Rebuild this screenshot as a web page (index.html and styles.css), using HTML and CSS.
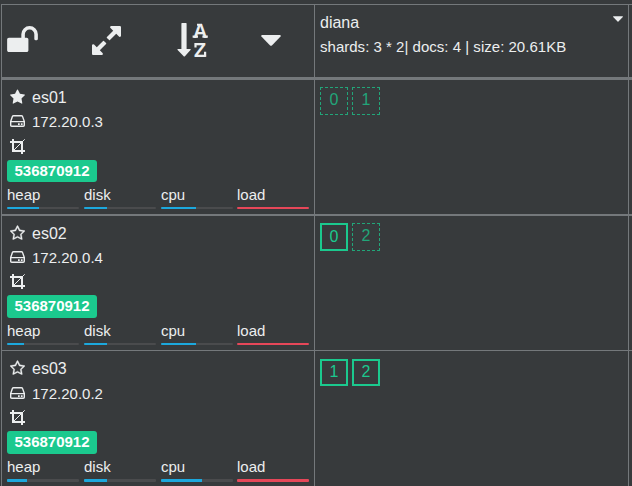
FILE: index.html
```html
<!DOCTYPE html>
<html lang="en">
<head>
<meta charset="utf-8">
<title>Cluster nodes</title>
<link rel="stylesheet" href="styles.css">
</head>
<body>
<svg class="defs" width="0" height="0">
  <symbol id="star" viewBox="0 0 1664 1640"><path d="M1664 647q0 22-26 48l-363 354 86 500q1 7 1 20 0 21-10.5 35.5t-30.5 14.5q-19 0-40-12l-449-236-449 236q-22 12-40 12-21 0-31.5-14.5t-10.5-35.5q0-6 2-20l86-500-364-354q-25-27-25-48 0-37 56-46l502-73 225-455q19-41 49-41t49 41l225 455 502 73q56 9 56 46z"/></symbol>
  <symbol id="star-o" viewBox="0 0 1664 1640"><path stroke="currentColor" stroke-width="40" d="M1137 1004l306-297-422-62-189-382-189 382-422 62 306 297-73 421 378-199 377 199zm527-357q0 22-26 48l-363 354 86 500q1 7 1 20 0 50-41 50-19 0-40-12l-449-236-449 236q-22 12-40 12-21 0-31.5-14.5t-10.5-35.5q0-6 2-20l86-500-364-354q-25-27-25-48 0-37 56-46l502-73 225-455q19-41 49-41t49 41l225 455 502 73q56 9 56 46z"/></symbol>
  <symbol id="disk" viewBox="0 0 15 12"><path d="M.7 6.6h13.6v3.6q0 1.1-1.1 1.1H1.8Q.7 11.3.7 10.2zM.7 6.6l1.7-5q.3-.9 1.2-.9h7.8q.9 0 1.2.9l1.7 5" fill="none" stroke="currentColor" stroke-width="1.4"/><path d="M8 8.2h1.7v1.7H8zM10.9 8.2h1.7v1.7h-1.7z"/></symbol>
  <symbol id="crop" viewBox="0 0 15 15"><path d="M0 3h12v12M3 0v12h12" fill="none" stroke="currentColor" stroke-width="2"/><path d="M3.6 11.4L14.7.3" stroke="currentColor" stroke-width="1"/></symbol>
</svg>
<main class="grid">
  <div class="cell head tools">
    <svg class="unlock" viewBox="0 256 1664 1408"><path d="M1664 704v256q0 26-19 45t-45 19h-64q-26 0-45-19t-19-45v-256q0-106-75-181t-181-75-181 75-75 181v192h96q40 0 68 28t28 68v576q0 40-28 68t-68 28h-960q-40 0-68-28t-28-68v-576q0-40 28-68t68-28h672v-192q0-185 131.5-316.5t316.5-131.5 316.5 131.5 131.5 316.5z"/></svg>
    <svg class="expand" viewBox="0 128 1536 1536"><path d="M755 1056q0 13-10 23l-332 332 144 144q19 19 19 45t-19 45-45 19h-448q-26 0-45-19t-19-45v-448q0-26 19-45t45-19 45 19l144 144 332-332q10-10 23-10t23 10l114 114q10 10 10 23zm781-864v448q0 26-19 45t-45 19-45-19l-144-144-332 332q-10 10-23 10t-23-10l-114-114q-10-10-10-23t10-23l332-332-144-144q-19-19-19-45t19-45 45-19h448q26 0 45 19t19 45z"/></svg>
    <svg class="sort" viewBox="0 0 32 34"><path d="M5 0h4q.6 0 .6.6V26h3.8q.7.4.1 1L7.7 33.4q-.4.4-.8 0L.6 27q-.5-.6.2-1h3.6V.6Q4.4 0 5 0z"/><text x="16" y="14.6">A</text><path d="M15.6 12.6h5.4v2.2h-5.4zM25.4 12.6h5.4v2.2h-5.4zM20 .8h5v2h-5z"/><text x="17.1" y="33.8">Z</text><path d="M17.4 20h2.2v4.6h-2.2zM27 28.8h2.2v5H27z"/></svg>
    <svg class="caret" viewBox="0 0 20 11"><path d="M1 0h18q1.4.5.6 1.6l-8.7 8.8q-.9.8-1.8 0L.4 1.6Q-.4.5 1 0z"/></svg>
  </div>
  <div class="cell head index">
    <div class="index-title"><span>diana</span><svg class="caret-small" viewBox="0 0 20 11"><path d="M1 0h18q1.4.5.6 1.6l-8.7 8.8q-.9.8-1.8 0L.4 1.6Q-.4.5 1 0z"/></svg></div>
    <div class="stats">shards: 3 * 2| docs: 4 | size: 20.61KB</div>
  </div>
  <div class="cell head"></div>

  <div class="cell node thick">
    <div class="name"><svg class="i-star"><use href="#star"/></svg>es01</div>
    <div class="ip"><svg class="i-disk"><use href="#disk"/></svg>172.20.0.3</div>
    <div class="role"><svg class="i-crop"><use href="#crop"/></svg></div>
    <div class="badge">536870912</div>
    <div class="meters">
      <div>heap<div class="bar"><i style="width:32px"></i></div></div>
      <div>disk<div class="bar"><i style="width:23px"></i></div></div>
      <div>cpu<div class="bar"><i style="width:35px"></i></div></div>
      <div>load<div class="bar"><i class="full"></i></div></div>
    </div>
  </div>
  <div class="cell shards thick"><span class="shard replica">0</span><span class="shard replica">1</span></div>
  <div class="cell thick"></div>

  <div class="cell node second">
    <div class="name"><svg class="i-star"><use href="#star-o"/></svg>es02</div>
    <div class="ip"><svg class="i-disk"><use href="#disk"/></svg>172.20.0.4</div>
    <div class="role"><svg class="i-crop"><use href="#crop"/></svg></div>
    <div class="badge">536870912</div>
    <div class="meters">
      <div>heap<div class="bar"><i style="width:17px"></i></div></div>
      <div>disk<div class="bar"><i style="width:23px"></i></div></div>
      <div>cpu<div class="bar"><i style="width:35px"></i></div></div>
      <div>load<div class="bar"><i class="full"></i></div></div>
    </div>
  </div>
  <div class="cell shards"><span class="shard">0</span><span class="shard replica">2</span></div>
  <div class="cell"></div>

  <div class="cell node third">
    <div class="name"><svg class="i-star"><use href="#star-o"/></svg>es03</div>
    <div class="ip"><svg class="i-disk"><use href="#disk"/></svg>172.20.0.2</div>
    <div class="role"><svg class="i-crop"><use href="#crop"/></svg></div>
    <div class="badge">536870912</div>
    <div class="meters">
      <div>heap<div class="bar"><i style="width:20px"></i></div></div>
      <div>disk<div class="bar"><i style="width:23px"></i></div></div>
      <div>cpu<div class="bar"><i style="width:41px"></i></div></div>
      <div>load<div class="bar"><i class="full"></i></div></div>
    </div>
  </div>
  <div class="cell shards last"><span class="shard">1</span><span class="shard">2</span></div>
  <div class="cell"></div>
</main>
</body>
</html>
```
FILE: styles.css
```css
* { box-sizing: border-box; }
body {
  margin: 0;
  height: 486px;
  overflow: hidden;
  background: #373a3c;
  color: #eceeef;
  font: 15px/25px "Liberation Sans", Arial, sans-serif;
}
svg { display: block; fill: currentColor; flex: none; }
.defs { position: absolute; }
.grid {
  display: grid;
  grid-template-columns: 313px 314px 4px;
  grid-template-rows: 75px 136px 135px 136px;
  margin: 4px 0 0 1px;
  border-top: 1px solid #74787b;
}
.cell {
  border-left: 1px solid #74787b;
  border-bottom: 1px solid #74787b;
  padding: 5px;
  min-width: 0;
}
.head { border-bottom-width: 3px; }
.thick { border-bottom-width: 2px; }

.tools { display: flex; align-items: flex-start; padding: 0 0 0 5px; }
.unlock { width: 31px; height: 26px; margin-top: 21px; }
.expand { width: 29px; height: 29px; margin: 21px 0 0 54px; }
.sort { width: 32px; height: 34px; margin: 18px 0 0 56px; overflow: visible; }
.sort text { font: bold 20px "Liberation Sans", Arial, sans-serif; }
.caret { width: 20px; height: 11px; margin: 30px 0 0 52px; }

.index-title {
  display: flex;
  justify-content: space-between;
  height: 24px;
  font-size: 16px;
  line-height: 26px;
}
.caret-small { width: 10px; height: 6px; margin-top: 6px; }
.stats { letter-spacing: .02px; }

.name, .ip, .role { display: flex; align-items: center; padding-left: 3px; }
.name { height: 24px; align-items: flex-start; font-size: 16px; line-height: 26px; gap: 7px; }
.ip { gap: 7px; height: 25px; }
.role { height: 26px; padding-bottom: 2px; }
.i-star { width: 15px; height: 15px; margin-top: 4px; }
.i-disk { width: 15px; height: 12px; margin-bottom: 1px; }
.i-crop { width: 15px; height: 15px; }
.badge {
  width: 90px;
  height: 22px;
  border-radius: 3px;
  background: #1bc98e;
  color: #fff;
  font-weight: bold;
  line-height: 22px;
  text-align: center;
}
.second .role { height: 25px; }
.third .ip { height: 26px; padding-top: 1px; }
.third .role { height: 25px; }
.second .badge, .third .badge { height: 23px; }
.meters {
  display: grid;
  grid-template-columns: 73px 73px 72px 72px;
  column-gap: 4px;
}
.bar {
  max-width: 72px;
  height: 2px;
  border-radius: 1px;
  background: #4a4b4d;
  overflow: hidden;
}
.bar i { display: block; height: 100%; background: #1ca8dd; }
.bar .full { width: 100%; background: #e64759; }
.third .bar { height: 3px; }

.shards { display: flex; gap: 4px; padding-top: 7px; }
.shard {
  width: 28px;
  height: 28px;
  border: 2px solid #1bc98e;
  color: #1bc98e;
  font-size: 16px;
  line-height: 23px;
  text-align: center;
}
.replica { border: 1px dashed #1bc98e; opacity: .75; }
.last { padding-top: 8px; }
.last .shard { height: 27px; line-height: 21px; }
```
